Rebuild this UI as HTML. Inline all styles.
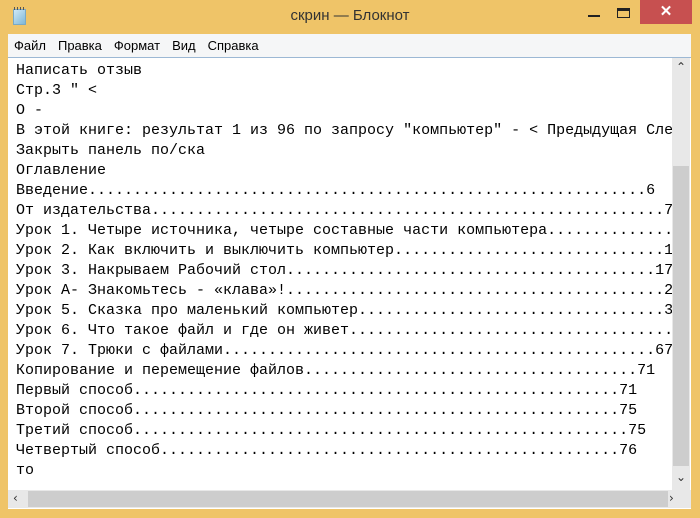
<!DOCTYPE html>
<html><head><meta charset="utf-8"><style>
*{margin:0;padding:0;box-sizing:border-box}
body{width:700px;height:518px;background:#efc468;position:relative;overflow:hidden;font-family:"Liberation Sans",sans-serif}
#title{position:absolute;left:0;top:7px;width:700px;text-align:center;font-size:15px;color:#333;}
#icon{position:absolute;left:13px;top:9px;width:13px;height:16px;background:linear-gradient(135deg,#cfe9f7,#7fb7d6);border:1px solid #7aa9c4}
#icon:before{content:"";position:absolute;left:0;top:-3px;width:11px;height:3px;background:repeating-linear-gradient(90deg,#555 0 1px,transparent 1px 3px)}
#min{position:absolute;left:588px;top:15px;width:12px;height:2px;background:#222}
#max{position:absolute;left:617px;top:8px;width:13px;height:10px;border:1px solid #222;border-top:3px solid #222}
#close{position:absolute;left:640px;top:0;width:52px;height:24px;background:#c75050;color:#fff;text-align:center;font-size:15px;line-height:24px;font-weight:bold}
#menu{position:absolute;left:8px;top:34px;width:683px;height:23px;background:#f5f6f7;font-size:13px;color:#000;line-height:23px}
#menu span{margin-left:6px;margin-right:6px}
#edit{position:absolute;left:8px;top:57px;width:683px;height:452px;background:#fff;border-top:1px solid #9cb8d4;overflow:hidden}
#text{position:absolute;left:8px;top:3px;width:656px;height:430px;overflow:hidden;font-family:"Liberation Mono",monospace;font-size:15px;line-height:20px;white-space:pre;color:#000}
#vs{position:absolute;left:664px;top:0;width:18px;height:432px;background:#e8e8e8}
#vthumb{position:absolute;left:1px;top:108px;width:16px;height:300px;background:#cdcdcd}
#hs{position:absolute;left:0;top:432px;width:683px;height:18px;background:#e8e8e8}
#hthumb{position:absolute;left:20px;top:1px;width:640px;height:16px;background:#cdcdcd}
.ar{position:absolute;font-size:12px;color:#333;font-family:"DejaVu Sans",sans-serif}
</style></head><body>
<div id="icon"></div>
<div id="title">скрин — Блокнот</div>
<div id="min"></div><div id="max"></div><div id="close">✕</div>
<div id="menu"><span>Файл</span><span>Правка</span><span>Формат</span><span>Вид</span><span>Справка</span></div>
<div id="edit">
<div id="text"></div>
<div id="vs"><div id="vthumb"></div><div class="ar" style="left:4px;top:2px">⌃</div><div class="ar" style="left:4px;top:412px">⌄</div></div>
<div id="hs"><div id="hthumb"></div><div class="ar" style="left:5px;top:1px">‹</div><div class="ar" style="left:661px;top:1px">›</div></div>
</div>
<script>
var L=[
["Написать отзыв"],["Стр.3 \" <"],["О -"],
["В этой книге: результат 1 из 96 по запросу \"компьютер\" - < Предыдущая Следующая"],
["Закрыть панель по/ска"],["Оглавление"],
["Введение",71,"6"],["От издательства",73,"7"],
["Урок 1. Четыре источника, четыре составные части компьютера",80,"9"],
["Урок 2. Как включить и выключить компьютер",74,"12"],
["Урок 3. Накрываем Рабочий стол",73,"17"],
["Урок А- Знакомьтесь - «клава»!",74,"25"],
["Урок 5. Сказка про маленький компьютер",74,"35"],
["Урок 6. Что такое файл и где он живет",80,"45"],
["Урок 7. Трюки с файлами",73,"67"],
["Копирование и перемещение файлов",71,"71"],
["Первый способ",69,"71"],["Второй способ",69,"75"],["Третий способ",70,"75"],["Четвертый способ",69,"76"],["то"]];
var out=L.map(function(a){if(a.length==1)return a[0];var n=a[1]-a[0].length-a[2].length;return a[0]+".".repeat(n)+a[2];});
document.getElementById("text").textContent=out.join("\n");
</script>
</body></html>
